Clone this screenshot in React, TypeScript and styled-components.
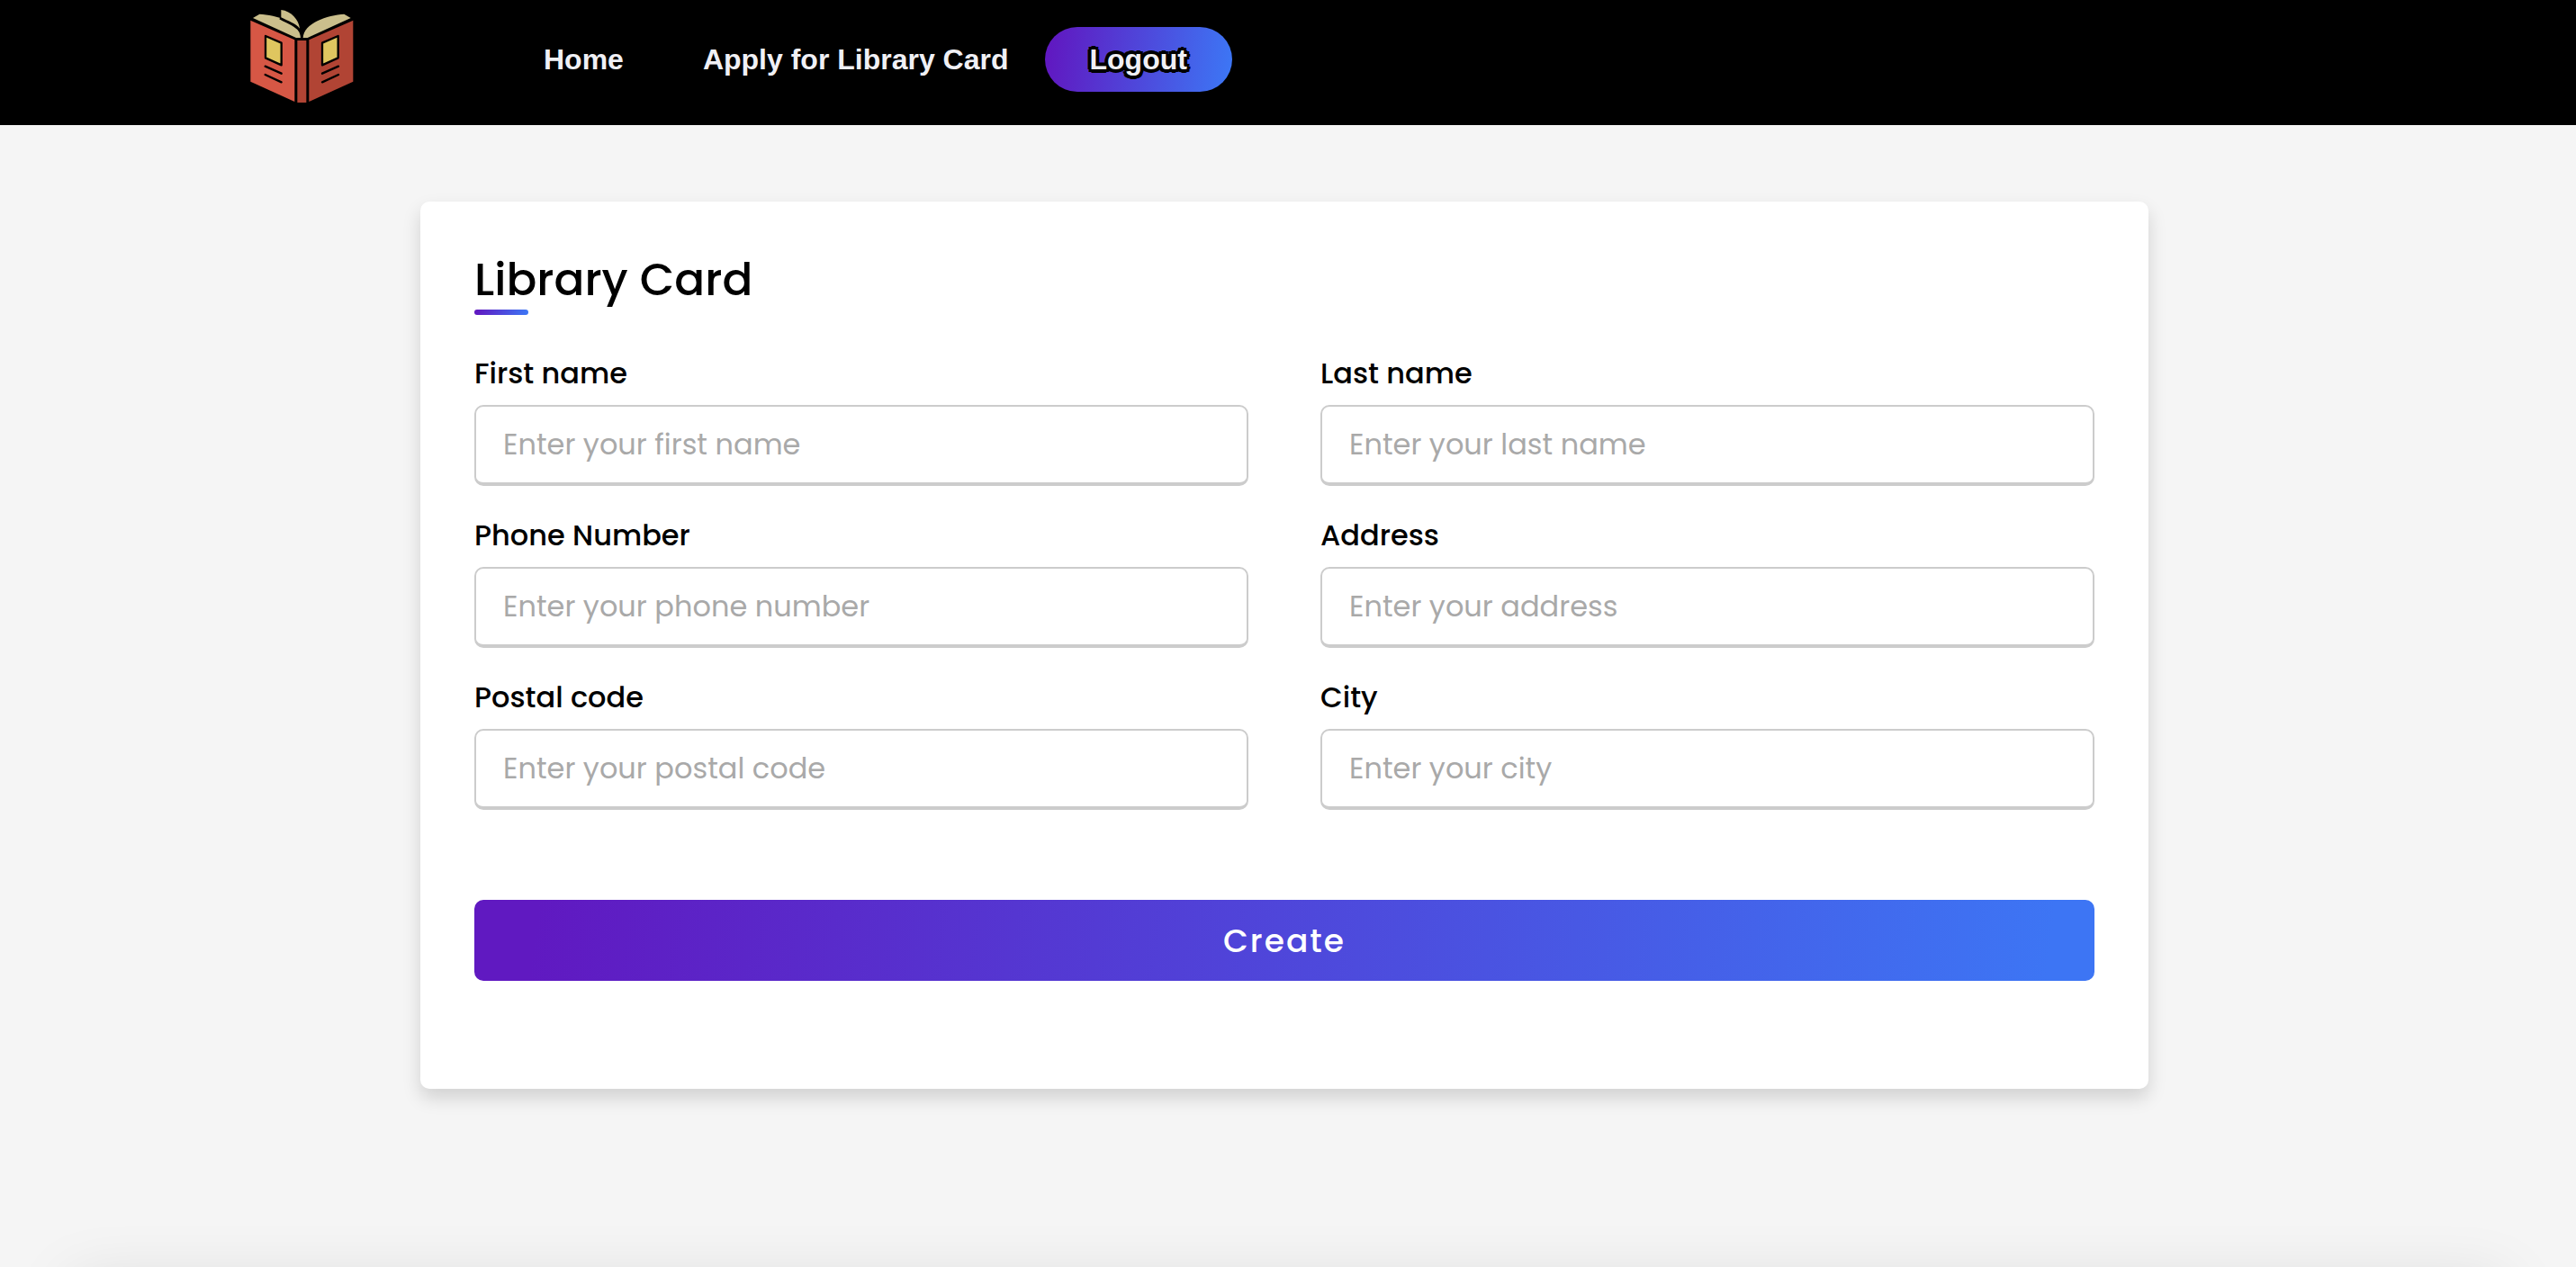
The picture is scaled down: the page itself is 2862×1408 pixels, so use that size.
import React from "react";
import styled, { createGlobalStyle } from "styled-components";

const brandGradient = "linear-gradient(98deg, #6019c1 4%, #3d75f4 97%)";

const GlobalStyle = createGlobalStyle`
  *, *::before, *::after { box-sizing: border-box; }
  body {
    margin: 0;
    background: #f5f5f5;
    font-family: Poppins, Inter, "Open Sans", sans-serif;
  }
`;

const Page = styled.div`
  min-height: 100vh;
  display: flex;
  flex-direction: column;
  overflow: hidden;
`;

const Header = styled.header`
  display: flex;
  align-items: flex-start;
  gap: 210px;
  padding: 10px 40px 17px 277px;
  background: #000;
`;

const LogoLink = styled.a`
  display: block;
  line-height: 0;
`;

const Nav = styled.nav`
  display: flex;
  align-items: center;
  gap: 40px;
  height: 112px;
  font-family: "Liberation Sans", Arial, sans-serif;
`;

const NavLinks = styled.ul`
  display: flex;
  gap: 88px;
  margin: 0;
  padding: 0;
  list-style: none;
`;

const NavLink = styled.a`
  color: #f0f0f5;
  font-size: 32px;
  font-weight: 700;
  line-height: 40px;
  text-decoration: none;
`;

const LogoutButton = styled.button`
  padding: 16px 50px;
  border: 0;
  border-radius: 36px;
  background: ${brandGradient};
  color: #f0f0f5;
  font-family: inherit;
  font-size: 32px;
  font-weight: 700;
  line-height: 40px;
  text-shadow: 4px 0 #000, -4px 0 #000, 0 4px #000, 0 -4px #000,
    3px 3px #000, -3px -3px #000, 3px -3px #000, -3px 3px #000;
  cursor: pointer;
`;

const Main = styled.main`
  flex: 1;
  display: flex;
  justify-content: center;
  align-items: flex-start;
  padding: 85px 28px 80px 20px;
`;

const Card = styled.section`
  width: 100%;
  max-width: 1920px;
  padding: 54px 60px 120px;
  border-radius: 10px;
  background: #fff;
  box-shadow: 0 10px 20px rgba(0, 0, 0, 0.15);
`;

const Title = styled.h1`
  margin: 0;
  color: #000;
  font-size: 50px;
  font-weight: 500;
  line-height: 66px;

  &::after {
    content: "";
    display: block;
    width: 60px;
    height: 6px;
    border-radius: 3px;
    background: ${brandGradient};
  }
`;

const Form = styled.form`
  display: flex;
  flex-direction: column;
  gap: 100px;
  padding-top: 40px;
`;

const Fields = styled.div`
  display: grid;
  grid-template-columns: repeat(2, minmax(0, 1fr));
  gap: 30px 80px;
`;

const Field = styled.div`
  display: flex;
  flex-direction: column;
  gap: 10px;
`;

const Label = styled.label`
  color: #000;
  font-size: 32px;
  font-weight: 500;
  line-height: 50px;
`;

const Input = styled.input`
  width: 100%;
  height: 90px;
  padding: 0 30px;
  border: 2px solid #ccc;
  border-bottom-width: 4px;
  border-radius: 10px;
  outline: none;
  background: #fff;
  color: #000;
  font-family: inherit;
  font-size: 32px;

  &::placeholder {
    color: #a9a9a9;
    opacity: 1;
  }
`;

const SubmitButton = styled.button`
  height: 90px;
  border: 0;
  border-radius: 10px;
  background: ${brandGradient};
  color: #fff;
  font-family: inherit;
  font-size: 36px;
  font-weight: 500;
  letter-spacing: 2px;
  cursor: pointer;
`;

const Footer = styled.footer`
  height: 200px;
  margin-bottom: -200px;
  box-shadow: 0 -60px 70px -80px rgba(0, 0, 0, 0.15);
`;

const fields = [
  { id: "firstName", label: "First name", placeholder: "Enter your first name", type: "text" },
  { id: "lastName", label: "Last name", placeholder: "Enter your last name", type: "text" },
  { id: "phone", label: "Phone Number", placeholder: "Enter your phone number", type: "tel" },
  { id: "address", label: "Address", placeholder: "Enter your address", type: "text" },
  { id: "postalCode", label: "Postal code", placeholder: "Enter your postal code", type: "text" },
  { id: "city", label: "City", placeholder: "Enter your city", type: "text" },
];

function BookLogo() {
  return (
    <svg width="117" height="105" viewBox="50 30 351 315" aria-hidden="true">
      <path d="M54 68 L201 133 V339 L54 272 Z" fill="#d65745" />
      <path d="M396 68 L249 133 V339 L396 272 Z" fill="#b14434" />
      <path d="M210 135 H240 V342 H210 Z" fill="#b14434" />
      <path d="M62 60 L84 47 C140 50 217 72 221 126 H206 Z" fill="#cbbf8c" />
      <path d="M388 60 L366 47 C310 50 230 78 229 126 H244 Z" fill="#cbbf8c" />
      <path d="M152 60 C179 76 203 81 218 102" fill="none" stroke="#000" strokeWidth="8" />
      <path
        d="M156 33 C190 37 215 66 218 95 C204 78 181 71 156 58 Z"
        fill="#cbbf8c"
      />
      <g stroke="#000" strokeWidth="7" strokeLinejoin="round" strokeLinecap="round">
        <path d="M104 120 L157 143 V217 L104 193 Z" fill="#dfc65f" />
        <path d="M346 120 L293 143 V217 L346 193 Z" fill="#dfc65f" />
        <path
          d="M103 221 L157 245 M103 249 L157 274 M347 221 L293 245 M347 249 L293 274"
          fill="none"
        />
      </g>
    </svg>
  );
}

export default function App() {
  return (
    <>
      <GlobalStyle />
      <Page>
        <Header>
          <LogoLink href="#" aria-label="Library home">
            <BookLogo />
          </LogoLink>
          <Nav>
            <NavLinks>
              <li><NavLink href="#">Home</NavLink></li>
              <li><NavLink href="#">Apply for Library Card</NavLink></li>
            </NavLinks>
            <LogoutButton type="button">Logout</LogoutButton>
          </Nav>
        </Header>
        <Main>
          <Card>
            <Title>Library Card</Title>
            <Form onSubmit={(event) => event.preventDefault()}>
              <Fields>
                {fields.map((field) => (
                  <Field key={field.id}>
                    <Label htmlFor={field.id}>{field.label}</Label>
                    <Input
                      id={field.id}
                      name={field.id}
                      type={field.type}
                      placeholder={field.placeholder}
                    />
                  </Field>
                ))}
              </Fields>
              <SubmitButton type="submit">Create</SubmitButton>
            </Form>
          </Card>
        </Main>
        <Footer />
      </Page>
    </>
  );
}
